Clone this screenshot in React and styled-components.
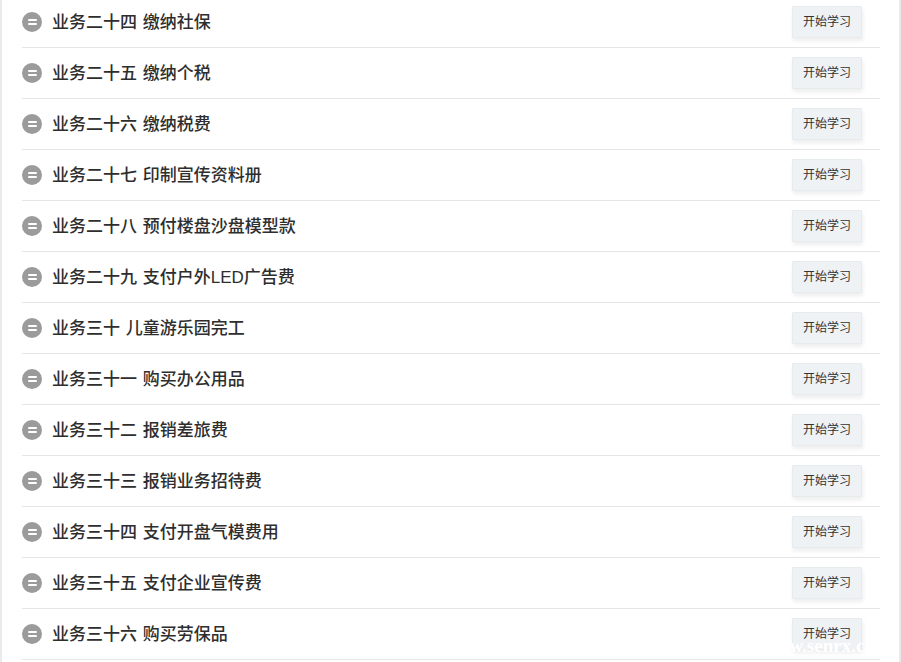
import React from "react";
import styled, { createGlobalStyle } from "styled-components";

const Global = createGlobalStyle`
  html, body { margin: 0; padding: 0; background: #fff; }
  body { width: 901px; height: 662px; overflow: hidden; font-family: "Liberation Sans", "Noto Sans CJK SC", sans-serif; }
`;

const Page = styled.div`
  position: relative;
  box-sizing: border-box;
  width: 901px;
  height: 662px;
  overflow: hidden;
  border-left: 2px solid #e8eaee;
  border-right: 2px solid #e8eaee;
  padding: 0 19px 0 20px;
`;

const List = styled.ul`
  list-style: none;
  margin: -3px 0 0;
  padding: 0;
`;

const Row = styled.li`
  box-sizing: border-box;
  height: 51px;
  display: flex;
  align-items: center;
  border-bottom: 1px solid #e6e6e6;
  padding: 0 18px 2px 0;
`;

const Badge = styled.span`
  width: 20px;
  height: 20px;
  border-radius: 50%;
  background: #9b9b9b;
  display: flex;
  flex-direction: column;
  align-items: center;
  justify-content: center;
  gap: 2px;
  flex: none;
  margin-top: 2px;
  &::before, &::after {
    content: "";
    width: 9px;
    height: 2px;
    border-radius: 1px;
    background: #fff;
  }
`;

const Title = styled.span`
  margin: 4px 0 0 10px;
  flex: 1;
  font-size: 17px;
  font-weight: 500;
  word-spacing: 1px;
  color: #2e2e2e;
  line-height: 24px;
  white-space: nowrap;
`;

const StartButton = styled.button`
  box-sizing: border-box;
  width: 70px;
  height: 32px;
  padding: 0 0 2px;
  margin-top: 1px;
  border: 1px solid #e6ebee;
  border-radius: 1px;
  background: #eef2f5;
  box-shadow: 1px 3px 4px rgba(0, 0, 0, 0.07);
  font-family: "Noto Sans CJK SC", sans-serif;
  font-size: 12px;
  color: #333;
`;

const Watermark = styled.div`
  position: absolute;
  left: 760px;
  top: 636px;
  font-family: "Liberation Serif", serif;
  font-weight: 700;
  font-size: 19px;
  line-height: 20px;
  color: #fff;
  white-space: nowrap;
`;

const items = [
  "业务二十四 缴纳社保",
  "业务二十五 缴纳个税",
  "业务二十六 缴纳税费",
  "业务二十七 印制宣传资料册",
  "业务二十八 预付楼盘沙盘模型款",
  "业务二十九 支付户外LED广告费",
  "业务三十 儿童游乐园完工",
  "业务三十一 购买办公用品",
  "业务三十二 报销差旅费",
  "业务三十三 报销业务招待费",
  "业务三十四 支付开盘气模费用",
  "业务三十五 支付企业宣传费",
  "业务三十六 购买劳保品",
];

export default function App() {
  return (
    <Page>
      <Global />
      <List>
        {items.map((t) => (
          <Row key={t}>
            <Badge />
            <Title>{t}</Title>
            <StartButton>开始学习</StartButton>
          </Row>
        ))}
      </List>
      <Watermark>www.senrx.com</Watermark>
    </Page>
  );
}
